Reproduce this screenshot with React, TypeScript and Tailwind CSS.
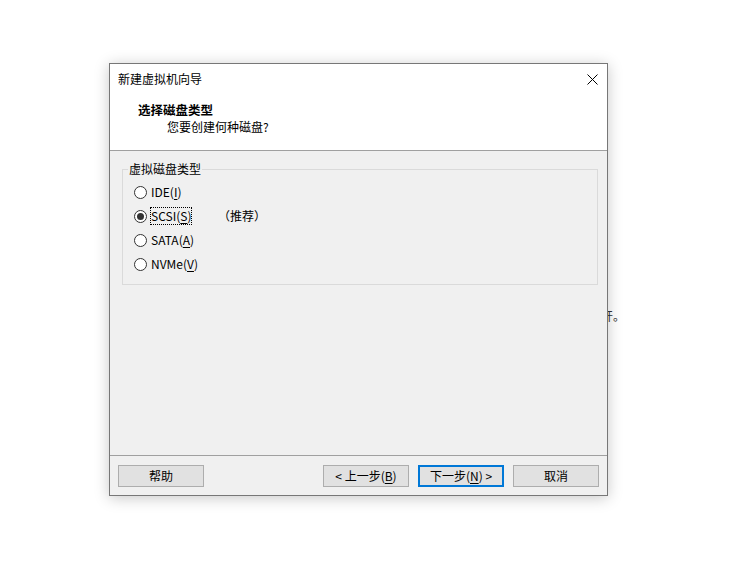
import { ReactNode } from "react";

const font = { fontFamily: '"Noto Sans CJK SC", "Noto Sans", sans-serif' };

const options = [
  { label: "IDE", key: "I", checked: false },
  { label: "SCSI", key: "S", checked: true, note: "（推荐）" },
  { label: "SATA", key: "A", checked: false },
  { label: "NVMe", key: "V", checked: false },
];

const Radio = ({ checked }: { checked: boolean }) => (
  <span className="flex h-[13px] w-[13px] shrink-0 items-center justify-center rounded-full border border-[#333] bg-white">
    {checked && <span className="h-[7px] w-[7px] rounded-full bg-[#333]" />}
  </span>
);

const Button = ({ children, primary }: { children: ReactNode; primary?: boolean }) => (
  <button
    className={`flex h-[22px] w-[86px] items-center justify-center bg-[#e1e1e1] text-[12px] leading-none text-black ${
      primary ? "border-2 border-[#0078d7]" : "border border-[#adadad]"
    }`}
  >
    {children}
  </button>
);

export default function App() {
  return (
    <div className="relative h-[570px] w-[729px] overflow-hidden bg-white" style={font}>
      {/* text of the page behind the wizard */}
      <div className="pt-[308px]">
        <p className="w-[625px] text-right text-[12px] leading-4 text-[#333]">以后可以在虚拟机设置中更改磁盘类型，此设置将在向导完成后打开。</p>
      </div>

      {/* wizard window */}
      <div className="absolute left-[109px] top-[63px] flex h-[433px] w-[499px] flex-col border border-[#777] bg-[#f0f0f0] shadow-[0_2px_14px_rgba(0,0,0,0.22)]">
        <div className="h-[86px] shrink-0 bg-white">
          <div className="flex h-[30px] items-center justify-between pl-[8px] pr-[9px]">
            <span className="text-[12px] text-black">新建虚拟机向导</span>
            <svg width="11" height="11" viewBox="0 0 11 11">
              <path d="M0.5 0.5 L10.5 10.5 M10.5 0.5 L0.5 10.5" stroke="#000" strokeWidth="1" />
            </svg>
          </div>
          <div className="pl-[28px] pt-[8px] text-[12.5px] font-bold leading-4 text-black">选择磁盘类型</div>
          <div className="pl-[57px] pt-[1px] text-[12px] leading-4 text-black">您要创建何种磁盘?</div>
        </div>
        <div className="h-px shrink-0 bg-[#a0a0a0]" />

        <div className="flex-1 pl-[12px] pr-[9px] pt-[18px]">
          <div className="relative border border-[#dadada] pb-[8px] pl-[11px] pt-[10px]">
            <span className="absolute left-[5px] top-[-9px] bg-[#f0f0f0] px-[1px] text-[12px] leading-4 text-black">虚拟磁盘类型</span>
            {options.map((o) => (
              <div key={o.label} className="flex h-[24px] items-center gap-[3px] text-[12px] text-black">
                <Radio checked={o.checked} />
                <div className="w-[65px]">
                  <span
                    className={`inline-block border px-0 leading-4 ${
                      o.checked ? "border-dotted border-black" : "border-transparent"
                    }`}
                  >
                    {o.label}(<span className="underline underline-offset-2">{o.key}</span>)
                  </span>
                </div>
                {o.note && <span className="leading-4">{o.note}</span>}
              </div>
            ))}
          </div>
        </div>

        <div className="h-px shrink-0 bg-[#a0a0a0]" />
        <div className="flex h-[39px] shrink-0 items-start justify-between pl-[8px] pr-[8px] pt-[9px]">
          <Button>帮助</Button>
          <div className="flex gap-[9px]">
            <Button>
              &lt; 上一步(<span className="underline underline-offset-2">B</span>)
            </Button>
            <Button primary>
              下一步(<span className="underline underline-offset-2">N</span>) &gt;
            </Button>
            <Button>取消</Button>
          </div>
        </div>
      </div>
    </div>
  );
}
